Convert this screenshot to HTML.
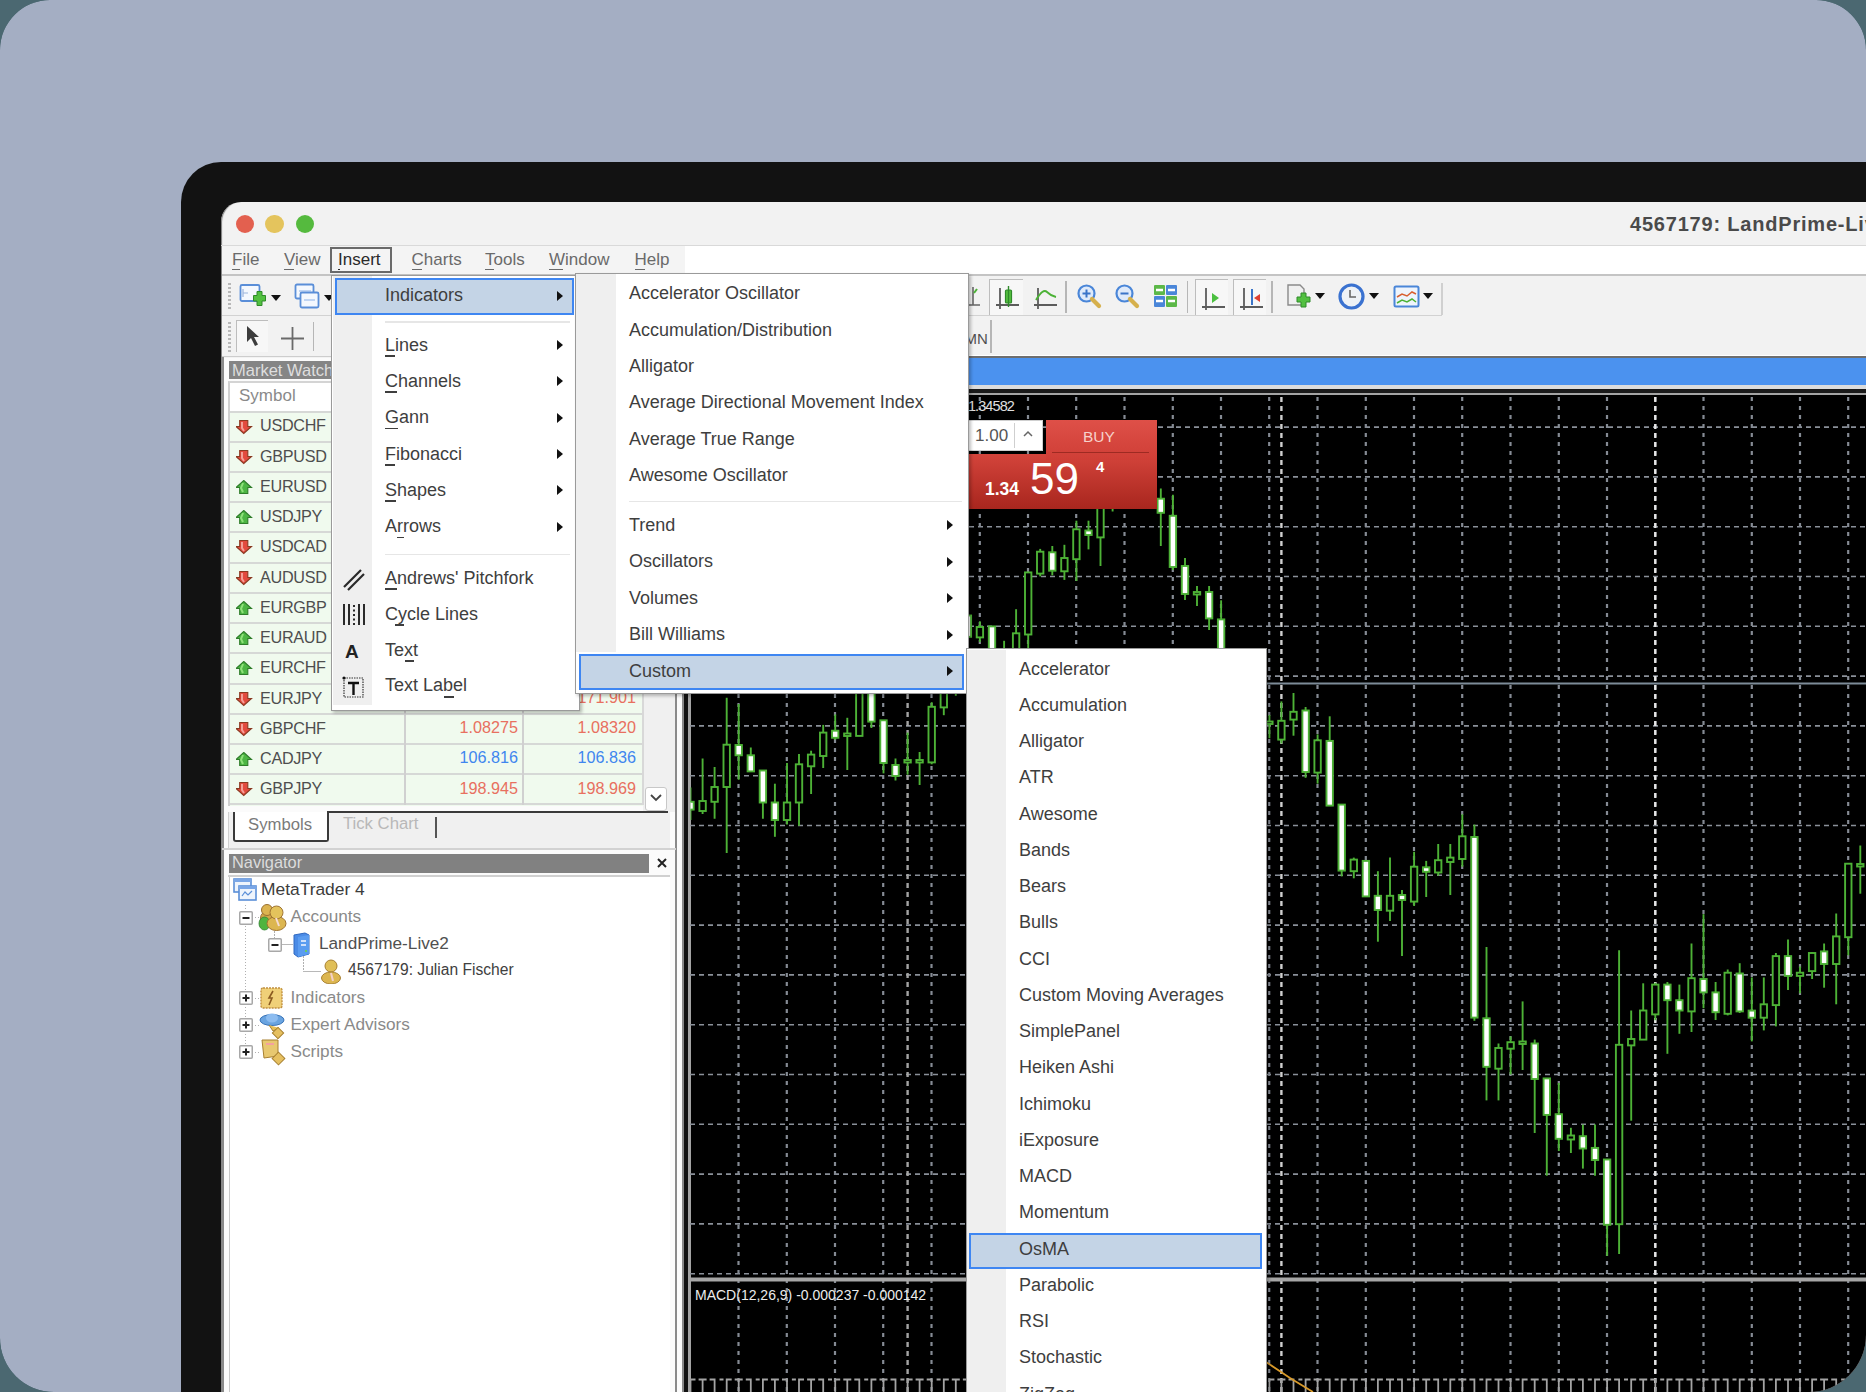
<!DOCTYPE html><html><head><meta charset="utf-8"><style>html,body{margin:0;padding:0;width:1866px;height:1392px;overflow:hidden;background:#4b6871;}#root{position:relative;width:1866px;height:1392px;overflow:hidden;border-radius:50px 50px 57px 54px;font-family:"Liberation Sans",sans-serif;}.t{position:absolute;white-space:nowrap;line-height:1.15;}</style></head><body><div id="root"><div style="position:absolute;left:0px;top:0px;width:1866px;height:1392px;background:#a4aec3;border-radius:50px 50px 57px 54px;"></div>
<div style="position:absolute;left:181px;top:162px;width:1800px;height:1400px;background:#121212;border-radius:40px;"></div>
<div style="position:absolute;left:221px;top:202px;width:1700px;height:1300px;background:#f2f2f2;border-top-left-radius:20px;box-shadow:inset 2px 0 1px -1px #7a7a7a;"></div>
<div style="position:absolute;left:221px;top:245px;width:1700px;height:1px;background:#d9d9d9;"></div>
<div style="position:absolute;left:235.5px;top:214.8px;width:18.4px;height:18.4px;background:#e3604f;border-radius:50%;"></div>
<div style="position:absolute;left:265.40000000000003px;top:214.8px;width:18.4px;height:18.4px;background:#e4c45d;border-radius:50%;"></div>
<div style="position:absolute;left:295.8px;top:214.8px;width:18.4px;height:18.4px;background:#55ba3e;border-radius:50%;"></div>
<div class="t" style="left:1630px;top:213.1px;font-size:20px;color:#4a4a4a;font-weight:bold;letter-spacing:0.8px;">4567179: LandPrime-Live2 - [EURUSD,H1]</div>
<div style="position:absolute;left:222px;top:246px;width:1700px;height:29px;background:#ffffff;"></div>
<div style="position:absolute;left:222px;top:246px;width:463px;height:29px;background:#f4f4f4;"></div>
<div style="position:absolute;left:222px;top:274px;width:1700px;height:1.5px;background:#c4c4c4;"></div>
<div style="position:absolute;left:330px;top:247px;width:62px;height:26px;border:2px solid #6a6a6a;box-sizing:border-box;background:#f4f4f4;"></div>
<div class="t" style="left:232px;top:250.2px;font-size:17px;color:#6a6a6a;font-weight:normal;">File</div>
<div style="position:absolute;left:232px;top:268.5px;width:8px;height:1.8px;background:#6a6a6a;"></div>
<div class="t" style="left:284px;top:250.2px;font-size:17px;color:#6a6a6a;font-weight:normal;">View</div>
<div style="position:absolute;left:284px;top:268.5px;width:10px;height:1.8px;background:#6a6a6a;"></div>
<div class="t" style="left:338px;top:250.2px;font-size:17px;color:#2a2a2a;font-weight:normal;">Insert</div>
<div style="position:absolute;left:338px;top:268.5px;width:2px;height:1.8px;background:#2a2a2a;"></div>
<div class="t" style="left:411.6px;top:250.2px;font-size:17px;color:#6a6a6a;font-weight:normal;">Charts</div>
<div style="position:absolute;left:411.6px;top:268.5px;width:10px;height:1.8px;background:#6a6a6a;"></div>
<div class="t" style="left:485px;top:250.2px;font-size:17px;color:#6a6a6a;font-weight:normal;">Tools</div>
<div style="position:absolute;left:485px;top:268.5px;width:9px;height:1.8px;background:#6a6a6a;"></div>
<div class="t" style="left:549px;top:250.2px;font-size:17px;color:#6a6a6a;font-weight:normal;">Window</div>
<div style="position:absolute;left:549px;top:268.5px;width:14px;height:1.8px;background:#6a6a6a;"></div>
<div class="t" style="left:634.5px;top:250.2px;font-size:17px;color:#6a6a6a;font-weight:normal;">Help</div>
<div style="position:absolute;left:634.5px;top:268.5px;width:10px;height:1.8px;background:#6a6a6a;"></div>
<div style="position:absolute;left:222px;top:275.5px;width:1700px;height:81px;background:#f2f2f2;"></div>
<div style="position:absolute;left:222px;top:314.5px;width:1220px;height:1.5px;background:#d2d2d2;"></div>
<div style="position:absolute;left:1441px;top:283px;width:1.5px;height:32px;background:#d0d0d0;"></div>
<div style="position:absolute;left:222px;top:355.5px;width:464px;height:1.5px;background:#cdcdcd;"></div>
<div style="position:absolute;left:686px;top:355px;width:1200px;height:1px;background:#ffffff;"></div>
<div style="position:absolute;left:686px;top:356.3px;width:1200px;height:1.8px;background:#6e6e6e;"></div>
<div style="position:absolute;left:228px;top:283px;width:3px;height:28px;background:repeating-linear-gradient(#b8b8b8 0 2px,transparent 2px 4px);"></div>
<div style="position:absolute;left:228px;top:322px;width:3px;height:30px;background:repeating-linear-gradient(#b8b8b8 0 2px,transparent 2px 4px);"></div>
<svg style="position:absolute;left:239px;top:283px" width="30" height="28"><rect x="1.5" y="2" width="19" height="16" rx="1.5" fill="#f4f8fe" stroke="#5a8ed8" stroke-width="1.8"/><path d="M4,6 V14 M4,10 H9" stroke="#9ab4dc" stroke-width="1.2"/><path d="M14.5,12.5 h3.5 v-4 h5 v4 h3.5 v5.5 h-3.5 v4.5 h-5 v-4.5 h-3.5 z" fill="#52c040" stroke="#2f8a2a" stroke-width="1"/></svg>
<svg style="position:absolute;left:271px;top:295px" width="10" height="6"><polygon points="0,0 10,0 5,6" fill="#111"/></svg>
<svg style="position:absolute;left:294px;top:283px" width="28" height="28"><rect x="1.5" y="1.5" width="18" height="14" rx="1.5" fill="#f4f8fe" stroke="#5a8ed8" stroke-width="1.8"/><rect x="6.5" y="9.5" width="18" height="15" rx="1.5" fill="#f4f8fe" stroke="#5a8ed8" stroke-width="1.8"/><path d="M5,8 H17 M10,17 H21" stroke="#8ab0e8" stroke-width="1.2"/></svg>
<svg style="position:absolute;left:324px;top:295px" width="10" height="6"><polygon points="0,0 10,0 5,6" fill="#111"/></svg>
<div style="position:absolute;left:235.5px;top:319.5px;width:32.5px;height:32.5px;background:#f7f7f7;border-top:1.5px solid #bdbdbd;border-left:1.5px solid #bdbdbd;box-sizing:border-box;"></div>
<svg style="position:absolute;left:245px;top:325px" width="16" height="24"><path d="M2,1 L2,17 L6,13 L10,21 L13,19.5 L9,12 L14,12 Z" fill="#3c3c3c"/></svg>
<svg style="position:absolute;left:280px;top:326px" width="25" height="25"><path d="M12.5,1 V24 M1,12.5 H24" stroke="#6a6a6a" stroke-width="1.8"/></svg>
<div style="position:absolute;left:312.5px;top:322px;width:1.6px;height:29px;background:#b6b6b6;"></div>
<svg style="position:absolute;left:966px;top:283px" width="16" height="28"><path d="M7,4 V22 M2,22 H14" stroke="#666" stroke-width="1.6"/><path d="M8,10 L11,6" stroke="#4cb236" stroke-width="2"/></svg>
<div style="position:absolute;left:988.5px;top:279px;width:34.5px;height:35.5px;background:#f7f7f7;border-top:1.5px solid #bdbdbd;border-left:1.5px solid #bdbdbd;box-sizing:border-box;"></div>
<svg style="position:absolute;left:995px;top:284px" width="26" height="28"><path d="M5,4 V25 M1,21 H24" stroke="#5c5c5c" stroke-width="1.8"/><rect x="10.5" y="6" width="6" height="13" rx="1" fill="#56c040" stroke="#2f8a2a" stroke-width="1.2"/><path d="M13.5,2 V23" stroke="#2f8a2a" stroke-width="1.4"/></svg>
<svg style="position:absolute;left:1033px;top:284px" width="26" height="28"><path d="M5,4 V25 M1,21 H24" stroke="#5c5c5c" stroke-width="1.8"/><path d="M3,16 Q10,4 14,8 T23,13" fill="none" stroke="#4cb236" stroke-width="1.8"/></svg>
<div style="position:absolute;left:1065px;top:281px;width:1.6px;height:32px;background:#b6b6b6;"></div>
<svg style="position:absolute;left:1077px;top:284px" width="26" height="26"><circle cx="9.5" cy="9.5" r="8" fill="#dfeafa" stroke="#4a86d8" stroke-width="2.2"/><path d="M15,15 L22,22" stroke="#d6b04c" stroke-width="4.2" stroke-linecap="round"/><path d="M5.5,9.5 H13.5" stroke="#3b74c8" stroke-width="2"/><path d="M9.5,5.5 V13.5" stroke="#3b74c8" stroke-width="2"/></svg>
<svg style="position:absolute;left:1115px;top:284px" width="26" height="26"><circle cx="9.5" cy="9.5" r="8" fill="#dfeafa" stroke="#4a86d8" stroke-width="2.2"/><path d="M15,15 L22,22" stroke="#d6b04c" stroke-width="4.2" stroke-linecap="round"/><path d="M5.5,9.5 H13.5" stroke="#3b74c8" stroke-width="2"/></svg>
<svg style="position:absolute;left:1153px;top:284px" width="28" height="26"><rect x="1" y="1" width="11" height="10" rx="1" fill="#5cb848"/><rect x="13" y="1" width="11" height="10" rx="1" fill="#4a86d8"/><rect x="1" y="12" width="11" height="11" rx="1" fill="#4a86d8"/><rect x="13" y="12" width="11" height="11" rx="1" fill="#5cb848"/><path d="M3,6 H10 M15,6 H22 M3,17 H10 M15,17 H22" stroke="#fff" stroke-width="2.4"/></svg>
<div style="position:absolute;left:1186.8px;top:281px;width:1.6px;height:32px;background:#b6b6b6;"></div>
<div style="position:absolute;left:1195px;top:279px;width:32.5px;height:35.5px;background:#f7f7f7;border-top:1.5px solid #bdbdbd;border-left:1.5px solid #bdbdbd;box-sizing:border-box;"></div>
<svg style="position:absolute;left:1201px;top:286px" width="26" height="26"><path d="M5,2 V24 M1,21 H24" stroke="#5c5c5c" stroke-width="1.8"/><polygon points="11,7 18,12 11,17" fill="#4cc040"/></svg>
<div style="position:absolute;left:1232.5px;top:279px;width:33.5px;height:35.5px;background:#f7f7f7;border-top:1.5px solid #bdbdbd;border-left:1.5px solid #bdbdbd;box-sizing:border-box;"></div>
<svg style="position:absolute;left:1239px;top:286px" width="26" height="26"><path d="M5,2 V24 M1,21 H24" stroke="#5c5c5c" stroke-width="1.8"/><path d="M13,3 V19" stroke="#3b74c8" stroke-width="2"/><polygon points="21,8 15,12 21,16" fill="#e04030"/></svg>
<div style="position:absolute;left:1271.2px;top:281px;width:1.6px;height:32px;background:#b6b6b6;"></div>
<svg style="position:absolute;left:1286px;top:283px" width="28" height="30"><path d="M2,2 H14 L18,6 V22 H2 Z" fill="#f0f0f0" stroke="#8a8a8a" stroke-width="1.4"/><path d="M11,14 h4 v-4 h5 v4 h4 v5 h-4 v5 h-5 v-5 h-4 z" fill="#52c040" stroke="#2f8a2a" stroke-width="1"/></svg>
<svg style="position:absolute;left:1314.5px;top:293px" width="10" height="6"><polygon points="0,0 10,0 5,6" fill="#111"/></svg>
<svg style="position:absolute;left:1338px;top:283px" width="28" height="28"><circle cx="13.5" cy="13.5" r="11.5" fill="#eef2f6" stroke="#3a72d0" stroke-width="3.2"/><path d="M12,7 V14 H18" fill="none" stroke="#666" stroke-width="1.6"/></svg>
<svg style="position:absolute;left:1369px;top:293px" width="10" height="6"><polygon points="0,0 10,0 5,6" fill="#111"/></svg>
<svg style="position:absolute;left:1393px;top:285px" width="28" height="24"><rect x="1.5" y="1.5" width="24" height="20" rx="1.5" fill="#eef4fc" stroke="#4a86d8" stroke-width="2"/><path d="M4,12 L9,9 L14,11 L19,7 L23,9" fill="none" stroke="#d86030" stroke-width="1.5"/><path d="M4,18 L9,15 L14,17 L19,14 L23,17" fill="none" stroke="#4cb236" stroke-width="1.5"/></svg>
<svg style="position:absolute;left:1423px;top:293px" width="10" height="6"><polygon points="0,0 10,0 5,6" fill="#111"/></svg>
<div class="t" style="left:964.5px;top:329.9px;font-size:15px;color:#505050;font-weight:normal;">MN</div>
<div style="position:absolute;left:990px;top:320px;width:1.6px;height:33px;background:#b6b6b6;"></div>
<div style="position:absolute;left:222px;top:358px;width:454px;height:1100px;background:#fbfbfb;"></div>
<div style="position:absolute;left:222px;top:356.5px;width:2px;height:1100px;background:#8a8a8a;"></div>
<div style="position:absolute;left:643px;top:380px;width:32px;height:432px;background:#f0f0f0;"></div>
<div style="position:absolute;left:228px;top:812px;width:442px;height:37px;background:#f0f0f0;border-left:1.5px solid #d0d0d0;box-sizing:border-box;"></div>
<div style="position:absolute;left:675px;top:358px;width:2px;height:1100px;background:#8a8a8a;"></div>
<div style="position:absolute;left:677px;top:358px;width:5px;height:1100px;background:#fbfbfb;"></div>
<div style="position:absolute;left:682px;top:358px;width:2px;height:1100px;background:#8a8a8a;"></div>
<div style="position:absolute;left:684px;top:358px;width:4px;height:1100px;background:#121212;"></div>
<div style="position:absolute;left:228.5px;top:361px;width:420px;height:18px;background:#858585;"></div>
<div class="t" style="left:232px;top:360.5px;font-size:16.5px;color:#dedede;font-weight:normal;">Market Watch</div>
<div style="position:absolute;left:228px;top:380.5px;width:415px;height:425px;background:#f0faee;border-left:2px solid #cfcfcf;border-top:2px solid #d4d4d4;box-sizing:border-box;"></div>
<div style="position:absolute;left:230px;top:382.5px;width:413px;height:28.5px;background:#ffffff;"></div>
<div class="t" style="left:239px;top:386.2px;font-size:17px;color:#8a8a8a;font-weight:normal;">Symbol</div>
<div class="t" style="left:419px;top:386.2px;font-size:17px;color:#8a8a8a;font-weight:normal;">Bid</div>
<div class="t" style="left:537px;top:386.2px;font-size:17px;color:#8a8a8a;font-weight:normal;">Ask</div>
<div style="position:absolute;left:229.5px;top:410.5px;width:413px;height:2px;background:#d6d8d6;"></div>
<div style="position:absolute;left:229.5px;top:440.73px;width:413px;height:2px;background:#d6d8d6;"></div>
<div style="position:absolute;left:229.5px;top:470.96px;width:413px;height:2px;background:#d6d8d6;"></div>
<div style="position:absolute;left:229.5px;top:501.19px;width:413px;height:2px;background:#d6d8d6;"></div>
<div style="position:absolute;left:229.5px;top:531.42px;width:413px;height:2px;background:#d6d8d6;"></div>
<div style="position:absolute;left:229.5px;top:561.65px;width:413px;height:2px;background:#d6d8d6;"></div>
<div style="position:absolute;left:229.5px;top:591.88px;width:413px;height:2px;background:#d6d8d6;"></div>
<div style="position:absolute;left:229.5px;top:622.11px;width:413px;height:2px;background:#d6d8d6;"></div>
<div style="position:absolute;left:229.5px;top:652.34px;width:413px;height:2px;background:#d6d8d6;"></div>
<div style="position:absolute;left:229.5px;top:682.5699999999999px;width:413px;height:2px;background:#d6d8d6;"></div>
<div style="position:absolute;left:229.5px;top:712.8px;width:413px;height:2px;background:#d6d8d6;"></div>
<div style="position:absolute;left:229.5px;top:743.03px;width:413px;height:2px;background:#d6d8d6;"></div>
<div style="position:absolute;left:229.5px;top:773.26px;width:413px;height:2px;background:#d6d8d6;"></div>
<div style="position:absolute;left:229.5px;top:803.49px;width:413px;height:2px;background:#d6d8d6;"></div>
<div style="position:absolute;left:404px;top:411px;width:2px;height:394px;background:#d0d0d0;"></div>
<div style="position:absolute;left:521.5px;top:411px;width:2px;height:394px;background:#d0d0d0;"></div>
<div style="position:absolute;left:642px;top:380px;width:1.5px;height:425px;background:#d8d8d8;"></div>
<svg style="position:absolute;left:236px;top:419.5px" width="17" height="15"><polygon points="3.7,0.5 11.8,0.5 11.8,6.5 15.5,6.5 7.75,13.5 0,6.5 3.7,6.5" fill="#e24a3e" stroke="#8a3a22" stroke-width="1.1"/><path d="M6,2 L6,8 L8,11" stroke="#f4a098" stroke-width="2" fill="none"/></svg>
<div class="t" style="left:260px;top:416.4px;font-size:16.2px;color:#4e4e4e;font-weight:normal;letter-spacing:-0.3px;">USDCHF</div>
<svg style="position:absolute;left:236px;top:449.73px" width="17" height="15"><polygon points="3.7,0.5 11.8,0.5 11.8,6.5 15.5,6.5 7.75,13.5 0,6.5 3.7,6.5" fill="#e24a3e" stroke="#8a3a22" stroke-width="1.1"/><path d="M6,2 L6,8 L8,11" stroke="#f4a098" stroke-width="2" fill="none"/></svg>
<div class="t" style="left:260px;top:446.6px;font-size:16.2px;color:#4e4e4e;font-weight:normal;letter-spacing:-0.3px;">GBPUSD</div>
<svg style="position:absolute;left:236px;top:479.96px" width="17" height="15"><polygon points="7.75,0.5 15.5,7.5 11.8,7.5 11.8,13.5 3.7,13.5 3.7,7.5 0,7.5" fill="#4cb543" stroke="#2f7d2a" stroke-width="1.1"/><path d="M7,3 L5,8 L7,12" stroke="#8fe27a" stroke-width="2" fill="none"/></svg>
<div class="t" style="left:260px;top:476.8px;font-size:16.2px;color:#4e4e4e;font-weight:normal;letter-spacing:-0.3px;">EURUSD</div>
<svg style="position:absolute;left:236px;top:510.19000000000005px" width="17" height="15"><polygon points="7.75,0.5 15.5,7.5 11.8,7.5 11.8,13.5 3.7,13.5 3.7,7.5 0,7.5" fill="#4cb543" stroke="#2f7d2a" stroke-width="1.1"/><path d="M7,3 L5,8 L7,12" stroke="#8fe27a" stroke-width="2" fill="none"/></svg>
<div class="t" style="left:260px;top:507.1px;font-size:16.2px;color:#4e4e4e;font-weight:normal;letter-spacing:-0.3px;">USDJPY</div>
<svg style="position:absolute;left:236px;top:540.42px" width="17" height="15"><polygon points="3.7,0.5 11.8,0.5 11.8,6.5 15.5,6.5 7.75,13.5 0,6.5 3.7,6.5" fill="#e24a3e" stroke="#8a3a22" stroke-width="1.1"/><path d="M6,2 L6,8 L8,11" stroke="#f4a098" stroke-width="2" fill="none"/></svg>
<div class="t" style="left:260px;top:537.3px;font-size:16.2px;color:#4e4e4e;font-weight:normal;letter-spacing:-0.3px;">USDCAD</div>
<svg style="position:absolute;left:236px;top:570.65px" width="17" height="15"><polygon points="3.7,0.5 11.8,0.5 11.8,6.5 15.5,6.5 7.75,13.5 0,6.5 3.7,6.5" fill="#e24a3e" stroke="#8a3a22" stroke-width="1.1"/><path d="M6,2 L6,8 L8,11" stroke="#f4a098" stroke-width="2" fill="none"/></svg>
<div class="t" style="left:260px;top:567.5px;font-size:16.2px;color:#4e4e4e;font-weight:normal;letter-spacing:-0.3px;">AUDUSD</div>
<svg style="position:absolute;left:236px;top:600.88px" width="17" height="15"><polygon points="7.75,0.5 15.5,7.5 11.8,7.5 11.8,13.5 3.7,13.5 3.7,7.5 0,7.5" fill="#4cb543" stroke="#2f7d2a" stroke-width="1.1"/><path d="M7,3 L5,8 L7,12" stroke="#8fe27a" stroke-width="2" fill="none"/></svg>
<div class="t" style="left:260px;top:597.8px;font-size:16.2px;color:#4e4e4e;font-weight:normal;letter-spacing:-0.3px;">EURGBP</div>
<svg style="position:absolute;left:236px;top:631.11px" width="17" height="15"><polygon points="7.75,0.5 15.5,7.5 11.8,7.5 11.8,13.5 3.7,13.5 3.7,7.5 0,7.5" fill="#4cb543" stroke="#2f7d2a" stroke-width="1.1"/><path d="M7,3 L5,8 L7,12" stroke="#8fe27a" stroke-width="2" fill="none"/></svg>
<div class="t" style="left:260px;top:628.0px;font-size:16.2px;color:#4e4e4e;font-weight:normal;letter-spacing:-0.3px;">EURAUD</div>
<svg style="position:absolute;left:236px;top:661.34px" width="17" height="15"><polygon points="7.75,0.5 15.5,7.5 11.8,7.5 11.8,13.5 3.7,13.5 3.7,7.5 0,7.5" fill="#4cb543" stroke="#2f7d2a" stroke-width="1.1"/><path d="M7,3 L5,8 L7,12" stroke="#8fe27a" stroke-width="2" fill="none"/></svg>
<div class="t" style="left:260px;top:658.2px;font-size:16.2px;color:#4e4e4e;font-weight:normal;letter-spacing:-0.3px;">EURCHF</div>
<svg style="position:absolute;left:236px;top:691.5699999999999px" width="17" height="15"><polygon points="3.7,0.5 11.8,0.5 11.8,6.5 15.5,6.5 7.75,13.5 0,6.5 3.7,6.5" fill="#e24a3e" stroke="#8a3a22" stroke-width="1.1"/><path d="M6,2 L6,8 L8,11" stroke="#f4a098" stroke-width="2" fill="none"/></svg>
<div class="t" style="left:260px;top:688.5px;font-size:16.2px;color:#4e4e4e;font-weight:normal;letter-spacing:-0.3px;">EURJPY</div>
<div class="t" style="left:404px;width:114px;text-align:right;top:687.8px;font-size:16.2px;color:#e8705f;">171.877</div>
<div class="t" style="left:522px;width:114px;text-align:right;top:687.8px;font-size:16.2px;color:#e8705f;">171.901</div>
<svg style="position:absolute;left:236px;top:721.8px" width="17" height="15"><polygon points="3.7,0.5 11.8,0.5 11.8,6.5 15.5,6.5 7.75,13.5 0,6.5 3.7,6.5" fill="#e24a3e" stroke="#8a3a22" stroke-width="1.1"/><path d="M6,2 L6,8 L8,11" stroke="#f4a098" stroke-width="2" fill="none"/></svg>
<div class="t" style="left:260px;top:718.7px;font-size:16.2px;color:#4e4e4e;font-weight:normal;letter-spacing:-0.3px;">GBPCHF</div>
<div class="t" style="left:404px;width:114px;text-align:right;top:718.0px;font-size:16.2px;color:#e8705f;">1.08275</div>
<div class="t" style="left:522px;width:114px;text-align:right;top:718.0px;font-size:16.2px;color:#e8705f;">1.08320</div>
<svg style="position:absolute;left:236px;top:752.03px" width="17" height="15"><polygon points="7.75,0.5 15.5,7.5 11.8,7.5 11.8,13.5 3.7,13.5 3.7,7.5 0,7.5" fill="#4cb543" stroke="#2f7d2a" stroke-width="1.1"/><path d="M7,3 L5,8 L7,12" stroke="#8fe27a" stroke-width="2" fill="none"/></svg>
<div class="t" style="left:260px;top:748.9px;font-size:16.2px;color:#4e4e4e;font-weight:normal;letter-spacing:-0.3px;">CADJPY</div>
<div class="t" style="left:404px;width:114px;text-align:right;top:748.2px;font-size:16.2px;color:#3f86ee;">106.816</div>
<div class="t" style="left:522px;width:114px;text-align:right;top:748.2px;font-size:16.2px;color:#3f86ee;">106.836</div>
<svg style="position:absolute;left:236px;top:782.26px" width="17" height="15"><polygon points="3.7,0.5 11.8,0.5 11.8,6.5 15.5,6.5 7.75,13.5 0,6.5 3.7,6.5" fill="#e24a3e" stroke="#8a3a22" stroke-width="1.1"/><path d="M6,2 L6,8 L8,11" stroke="#f4a098" stroke-width="2" fill="none"/></svg>
<div class="t" style="left:260px;top:779.1px;font-size:16.2px;color:#4e4e4e;font-weight:normal;letter-spacing:-0.3px;">GBPJPY</div>
<div class="t" style="left:404px;width:114px;text-align:right;top:778.5px;font-size:16.2px;color:#e8705f;">198.945</div>
<div class="t" style="left:522px;width:114px;text-align:right;top:778.5px;font-size:16.2px;color:#e8705f;">198.969</div>
<div style="position:absolute;left:645px;top:786.5px;width:22px;height:24px;background:#fff;border:1px solid #c8c8c8;border-radius:3px;box-sizing:border-box;"></div>
<svg style="position:absolute;left:648px;top:792px" width="16" height="12"><polyline points="3,3 8,8 13,3" fill="none" stroke="#444" stroke-width="1.8"/></svg>
<div style="position:absolute;left:327px;top:811px;width:341px;height:2.2px;background:#3a3a3a;"></div>
<div style="position:absolute;left:232.5px;top:811.5px;width:96px;height:30px;background:#fff;border:2.2px solid #3a3a3a;border-top:none;border-radius:0 0 3px 3px;box-sizing:border-box;"></div>
<div style="position:absolute;left:232.5px;top:811.5px;width:2.2px;height:4px;background:#3a3a3a;"></div>
<div class="t" style="left:248px;top:815.4px;font-size:16.7px;color:#7a7a7a;font-weight:normal;">Symbols</div>
<div class="t" style="left:343px;top:814.4px;font-size:16.7px;color:#b8b8b8;font-weight:normal;">Tick Chart</div>
<div style="position:absolute;left:434.5px;top:817px;width:2.2px;height:21px;background:#555;"></div>
<div style="position:absolute;left:222px;top:848px;width:454px;height:2px;background:#d2d2d2;"></div>
<div style="position:absolute;left:228.5px;top:854px;width:420px;height:18.5px;background:#818181;"></div>
<div class="t" style="left:232px;top:853.1px;font-size:16.4px;color:#dcdcdc;font-weight:normal;">Navigator</div>
<svg style="position:absolute;left:656px;top:857px" width="12" height="12"><path d="M2,2 L10,10 M10,2 L2,10" stroke="#222" stroke-width="2"/></svg>
<div style="position:absolute;left:228px;top:874.5px;width:442px;height:2px;background:#d0d0d0;"></div>
<div style="position:absolute;left:229px;top:876.5px;width:441px;height:600px;background:#ffffff;border-left:1.5px solid #c8c8c8;box-sizing:border-box;"></div>
<div style="position:absolute;left:244.5px;top:905px;width:1.3px;height:148px;background:repeating-linear-gradient(#b0b0b0 0 1.5px,transparent 1.5px 3px);"></div>
<div style="position:absolute;left:273.5px;top:928px;width:1.3px;height:10px;background:repeating-linear-gradient(#b0b0b0 0 1.5px,transparent 1.5px 3px);"></div>
<div style="position:absolute;left:302.5px;top:956px;width:1.3px;height:16px;background:repeating-linear-gradient(#b0b0b0 0 1.5px,transparent 1.5px 3px);"></div>
<div style="position:absolute;left:302.5px;top:970.5px;width:18px;height:1.3px;background:#b8b8b8;"></div>
<div style="position:absolute;left:281px;top:944px;width:12px;height:1.3px;background:#b8b8b8;"></div>
<div style="position:absolute;left:252px;top:917px;width:7px;height:1.3px;background:repeating-linear-gradient(90deg,#b0b0b0 0 1.5px,transparent 1.5px 3px);"></div>
<div style="position:absolute;left:252px;top:998px;width:7px;height:1.3px;background:repeating-linear-gradient(90deg,#b0b0b0 0 1.5px,transparent 1.5px 3px);"></div>
<div style="position:absolute;left:252px;top:1025px;width:7px;height:1.3px;background:repeating-linear-gradient(90deg,#b0b0b0 0 1.5px,transparent 1.5px 3px);"></div>
<div style="position:absolute;left:252px;top:1052px;width:7px;height:1.3px;background:repeating-linear-gradient(90deg,#b0b0b0 0 1.5px,transparent 1.5px 3px);"></div>
<svg style="position:absolute;left:238.5px;top:910.5px" width="14" height="14"><rect x="0.75" y="0.75" width="12.5" height="12.5" fill="#fff" stroke="#a8a8a8" stroke-width="1.5" rx="1"/><path d="M3.5,7 H10.5" stroke="#222" stroke-width="2"/></svg>
<svg style="position:absolute;left:267.5px;top:937.5px" width="14" height="14"><rect x="0.75" y="0.75" width="12.5" height="12.5" fill="#fff" stroke="#a8a8a8" stroke-width="1.5" rx="1"/><path d="M3.5,7 H10.5" stroke="#222" stroke-width="2"/></svg>
<svg style="position:absolute;left:238.5px;top:991px" width="14" height="14"><rect x="0.75" y="0.75" width="12.5" height="12.5" fill="#fff" stroke="#a8a8a8" stroke-width="1.5" rx="1"/><path d="M3.5,7 H10.5" stroke="#222" stroke-width="2"/><path d="M7,3.5 V10.5" stroke="#222" stroke-width="2"/></svg>
<svg style="position:absolute;left:238.5px;top:1018px" width="14" height="14"><rect x="0.75" y="0.75" width="12.5" height="12.5" fill="#fff" stroke="#a8a8a8" stroke-width="1.5" rx="1"/><path d="M3.5,7 H10.5" stroke="#222" stroke-width="2"/><path d="M7,3.5 V10.5" stroke="#222" stroke-width="2"/></svg>
<svg style="position:absolute;left:238.5px;top:1045px" width="14" height="14"><rect x="0.75" y="0.75" width="12.5" height="12.5" fill="#fff" stroke="#a8a8a8" stroke-width="1.5" rx="1"/><path d="M3.5,7 H10.5" stroke="#222" stroke-width="2"/><path d="M7,3.5 V10.5" stroke="#222" stroke-width="2"/></svg>
<svg style="position:absolute;left:233px;top:878px" width="24" height="24">
<rect x="1" y="1" width="17" height="13" fill="#eef4fc" stroke="#5b8fd8" stroke-width="1.6"/>
<rect x="1" y="1" width="17" height="3" fill="#7aa6e6"/>
<rect x="6" y="8" width="17" height="14" fill="#eef4fc" stroke="#5b8fd8" stroke-width="1.6"/>
<rect x="6" y="8" width="17" height="3" fill="#7aa6e6"/>
<polyline points="9,18 12,14 15,17 19,13" fill="none" stroke="#5b8fd8" stroke-width="1.2"/></svg>
<svg style="position:absolute;left:258px;top:903px" width="30" height="28">
<ellipse cx="10" cy="15" rx="7.5" ry="7" fill="#d2a848" stroke="#9a7030" stroke-width="1"/>
<circle cx="9" cy="7" r="5.5" fill="#dcb450" stroke="#9a7030" stroke-width="1"/>
<ellipse cx="6.5" cy="20.5" rx="5.5" ry="6.5" fill="#4fb43e" stroke="#2f8030" stroke-width="0.8"/>
<ellipse cx="18.5" cy="20.5" rx="9.5" ry="7" fill="#dcb650" stroke="#a07432" stroke-width="1"/>
<circle cx="18.5" cy="9.5" r="6.5" fill="#e4c35c" stroke="#a07432" stroke-width="1"/>
<path d="M18,15 L21,23" stroke="#f6dcd4" stroke-width="2"/></svg>
<svg style="position:absolute;left:292px;top:932px" width="20" height="26">
<path d="M2,3 L13,1 L17,3 L17,22 L6,25 L2,22 Z" fill="#4a8be6" stroke="#2f68c0" stroke-width="1"/>
<path d="M6,5 L17,3 L17,22 L6,25 Z" fill="#5a9cf0"/>
<rect x="9" y="8" width="5" height="2" fill="#cfe0fa"/><rect x="9" y="12" width="5" height="2" fill="#cfe0fa"/>
<rect x="13" y="18" width="2" height="2" fill="#6c6"/></svg>
<svg style="position:absolute;left:320px;top:959px" width="22" height="25">
<circle cx="11" cy="7" r="6" fill="#e0bf58" stroke="#a88030" stroke-width="1"/>
<ellipse cx="11" cy="19" rx="9.5" ry="6" fill="#dcb650" stroke="#a88030" stroke-width="1"/>
<path d="M11,14 L13,22" stroke="#f4d0c8" stroke-width="2"/></svg>
<svg style="position:absolute;left:260px;top:986px" width="24" height="24">
<rect x="1" y="2" width="21" height="20" rx="2" fill="#f0d078" stroke="#c09040" stroke-width="1.4" stroke-dasharray="2 1"/>
<path d="M13,5 L9,12 L12,12 L9,19" fill="none" stroke="#8a5a20" stroke-width="1.6"/></svg>
<svg style="position:absolute;left:259px;top:1011px" width="28" height="28">
<ellipse cx="13" cy="9" rx="12" ry="5.5" fill="#6aa4e0" stroke="#3a74b8" stroke-width="1"/>
<ellipse cx="13" cy="7" rx="6" ry="4.5" fill="#8cbcf0"/>
<path d="M10,14 L14,20 L20,17" fill="#e8c058" stroke="#a88030" stroke-width="1"/>
<rect x="15" y="18" width="8" height="8" transform="rotate(45 19 22)" fill="#e6c060" stroke="#a88030" stroke-width="1"/></svg>
<svg style="position:absolute;left:259px;top:1038px" width="28" height="28">
<path d="M3,2 L19,2 L19,18 L5,20 Z" fill="#e8c870" stroke="#a88030" stroke-width="1"/>
<rect x="7" y="5" width="8" height="2" fill="#f4a0a0"/>
<rect x="15" y="16" width="9" height="9" transform="rotate(45 19.5 20.5)" fill="#e6c060" stroke="#a88030" stroke-width="1"/></svg>
<div class="t" style="left:261px;top:879.0px;font-size:17.4px;color:#3c3c3c;font-weight:normal;">MetaTrader 4</div>
<div class="t" style="left:290.5px;top:906.6px;font-size:17.2px;color:#8a8a8a;font-weight:normal;">Accounts</div>
<div class="t" style="left:319px;top:933.6px;font-size:17.2px;color:#505050;font-weight:normal;">LandPrime-Live2</div>
<div class="t" style="left:348px;top:961.0px;font-size:15.6px;color:#404040;font-weight:normal;">4567179: Julian Fischer</div>
<div class="t" style="left:290.5px;top:988.1px;font-size:17.2px;color:#8a8a8a;font-weight:normal;">Indicators</div>
<div class="t" style="left:290.5px;top:1015.1px;font-size:17.2px;color:#8a8a8a;font-weight:normal;">Expert Advisors</div>
<div class="t" style="left:290.5px;top:1042.1px;font-size:17.2px;color:#8a8a8a;font-weight:normal;">Scripts</div>
<div style="position:absolute;left:686px;top:358.3px;width:1200px;height:27px;background:#4b92ef;"></div>
<div style="position:absolute;left:686px;top:385px;width:1200px;height:4px;background:#dcdcdc;"></div>
<div style="position:absolute;left:686px;top:389px;width:1200px;height:3.5px;background:#1a1a1a;"></div>
<div style="position:absolute;left:686px;top:392.5px;width:1200px;height:2.5px;background:#a4a4a4;"></div>
<div style="position:absolute;left:688px;top:395px;width:1200px;height:1000px;background:#000;"></div>
<div style="position:absolute;left:688px;top:392.5px;width:2.5px;height:1000px;background:#a4a4a4;"></div>
<svg style="position:absolute;left:0;top:0" width="1866" height="1392">
<defs><clipPath id="cc"><rect x="690.5" y="395" width="1180" height="883"/></clipPath>
<clipPath id="mc"><rect x="690.5" y="1282" width="1180" height="120"/></clipPath></defs>
<g stroke="#8a9099" stroke-width="1.6">
<line x1="690" y1="427.1" x2="1866" y2="427.1" stroke-dasharray="5 4"/>
<line x1="690" y1="476.9" x2="1866" y2="476.9" stroke-dasharray="5 4"/>
<line x1="690" y1="526.7" x2="1866" y2="526.7" stroke-dasharray="5 4"/>
<line x1="690" y1="576.5" x2="1866" y2="576.5" stroke-dasharray="5 4"/>
<line x1="690" y1="626.3" x2="1866" y2="626.3" stroke-dasharray="5 4"/>
<line x1="690" y1="676.1" x2="1866" y2="676.1" stroke-dasharray="5 4"/>
<line x1="690" y1="725.9" x2="1866" y2="725.9" stroke-dasharray="5 4"/>
<line x1="690" y1="775.7" x2="1866" y2="775.7" stroke-dasharray="5 4"/>
<line x1="690" y1="825.5" x2="1866" y2="825.5" stroke-dasharray="5 4"/>
<line x1="690" y1="875.3" x2="1866" y2="875.3" stroke-dasharray="5 4"/>
<line x1="690" y1="925.1" x2="1866" y2="925.1" stroke-dasharray="5 4"/>
<line x1="690" y1="974.9" x2="1866" y2="974.9" stroke-dasharray="5 4"/>
<line x1="690" y1="1024.7" x2="1866" y2="1024.7" stroke-dasharray="5 4"/>
<line x1="690" y1="1074.5" x2="1866" y2="1074.5" stroke-dasharray="5 4"/>
<line x1="690" y1="1124.3" x2="1866" y2="1124.3" stroke-dasharray="5 4"/>
<line x1="690" y1="1174.1" x2="1866" y2="1174.1" stroke-dasharray="5 4"/>
<line x1="690" y1="1223.9" x2="1866" y2="1223.9" stroke-dasharray="5 4"/>
<line x1="690" y1="1273.7" x2="1866" y2="1273.7" stroke-dasharray="5 4"/>
</g><g stroke="#858b94" stroke-width="2.2" stroke-dasharray="4 5">
<line x1="738.5" y1="397" x2="738.5" y2="1392"/>
<line x1="786.8" y1="397" x2="786.8" y2="1392"/>
<line x1="835.0" y1="397" x2="835.0" y2="1392"/>
<line x1="883.2" y1="397" x2="883.2" y2="1392"/>
<line x1="931.5" y1="397" x2="931.5" y2="1392"/>
<line x1="979.8" y1="397" x2="979.8" y2="1392"/>
<line x1="1028.0" y1="397" x2="1028.0" y2="1392"/>
<line x1="1076.2" y1="397" x2="1076.2" y2="1392"/>
<line x1="1124.5" y1="397" x2="1124.5" y2="1392"/>
<line x1="1172.8" y1="397" x2="1172.8" y2="1392"/>
<line x1="1221.0" y1="397" x2="1221.0" y2="1392"/>
<line x1="1269.2" y1="397" x2="1269.2" y2="1392"/>
<line x1="1317.5" y1="397" x2="1317.5" y2="1392"/>
<line x1="1365.8" y1="397" x2="1365.8" y2="1392"/>
<line x1="1414.0" y1="397" x2="1414.0" y2="1392"/>
<line x1="1462.2" y1="397" x2="1462.2" y2="1392"/>
<line x1="1510.5" y1="397" x2="1510.5" y2="1392"/>
<line x1="1558.8" y1="397" x2="1558.8" y2="1392"/>
<line x1="1607.0" y1="397" x2="1607.0" y2="1392"/>
<line x1="1655.2" y1="397" x2="1655.2" y2="1392"/>
<line x1="1703.5" y1="397" x2="1703.5" y2="1392"/>
<line x1="1751.8" y1="397" x2="1751.8" y2="1392"/>
<line x1="1800.0" y1="397" x2="1800.0" y2="1392"/>
<line x1="1848.2" y1="397" x2="1848.2" y2="1392"/>
</g><g stroke-width="2.4" stroke-dasharray="5 4">
<line x1="907.6" y1="397" x2="907.6" y2="1392" stroke="#a4a4a4"/>
<line x1="1281.4" y1="397" x2="1281.4" y2="1392" stroke="#cfcfcf"/>
<line x1="1655.3" y1="397" x2="1655.3" y2="1392" stroke="#e6e6e6"/>
</g>
<line x1="690" y1="683.5" x2="1866" y2="683.5" stroke="#7d8b98" stroke-width="2"/>
<g clip-path="url(#cc)" stroke="#4db236" stroke-width="1.9">
<line x1="690.5" y1="787.6" x2="690.5" y2="820.0"/>
<rect x="687.3" y="801.8" width="6.4" height="7.8" fill="#ffffff"/>
<line x1="702.6" y1="758.5" x2="702.6" y2="814.0"/>
<rect x="699.4" y="801.0" width="6.4" height="10.0" fill="#000000"/>
<line x1="714.6" y1="767.0" x2="714.6" y2="818.7"/>
<rect x="711.4" y="787.0" width="6.4" height="14.8" fill="#000000"/>
<line x1="726.7" y1="697.7" x2="726.7" y2="853.0"/>
<rect x="723.5" y="744.7" width="6.4" height="42.3" fill="#000000"/>
<line x1="738.7" y1="704.0" x2="738.7" y2="779.8"/>
<rect x="735.5" y="745.0" width="6.4" height="10.3" fill="#ffffff"/>
<line x1="750.8" y1="747.5" x2="750.8" y2="772.0"/>
<rect x="747.6" y="755.3" width="6.4" height="16.1" fill="#ffffff"/>
<line x1="762.9" y1="770.0" x2="762.9" y2="818.7"/>
<rect x="759.7" y="770.5" width="6.4" height="32.0" fill="#ffffff"/>
<line x1="774.9" y1="783.7" x2="774.9" y2="836.8"/>
<rect x="771.7" y="802.5" width="6.4" height="17.5" fill="#ffffff"/>
<line x1="787.0" y1="763.0" x2="787.0" y2="824.5"/>
<rect x="783.8" y="802.5" width="6.4" height="17.5" fill="#000000"/>
<line x1="799.0" y1="754.0" x2="799.0" y2="825.8"/>
<rect x="795.8" y="764.3" width="6.4" height="38.2" fill="#000000"/>
<line x1="811.1" y1="750.7" x2="811.1" y2="794.0"/>
<rect x="807.9" y="754.6" width="6.4" height="11.7" fill="#000000"/>
<line x1="823.2" y1="724.9" x2="823.2" y2="768.0"/>
<rect x="820.0" y="732.6" width="6.4" height="23.4" fill="#000000"/>
<line x1="835.2" y1="714.5" x2="835.2" y2="739.7"/>
<rect x="832.0" y="730.7" width="6.4" height="7.1" fill="#ffffff"/>
<line x1="847.3" y1="717.8" x2="847.3" y2="770.0"/>
<rect x="844.1" y="733.5" width="6.4" height="2.5" fill="#000000"/>
<line x1="859.3" y1="660.0" x2="859.3" y2="735.9"/>
<rect x="856.1" y="660.0" width="6.4" height="75.9" fill="#000000"/>
<line x1="871.4" y1="660.0" x2="871.4" y2="728.0"/>
<rect x="868.2" y="660.0" width="6.4" height="61.6" fill="#ffffff"/>
<line x1="883.5" y1="720.3" x2="883.5" y2="773.4"/>
<rect x="880.3" y="720.3" width="6.4" height="42.7" fill="#ffffff"/>
<line x1="895.5" y1="758.5" x2="895.5" y2="780.5"/>
<rect x="892.3" y="765.0" width="6.4" height="11.0" fill="#ffffff"/>
<line x1="907.6" y1="732.6" x2="907.6" y2="774.7"/>
<rect x="904.4" y="760.0" width="6.4" height="2.5" fill="#000000"/>
<line x1="919.6" y1="752.0" x2="919.6" y2="785.0"/>
<rect x="916.4" y="760.0" width="6.4" height="2.5" fill="#000000"/>
<line x1="931.7" y1="702.2" x2="931.7" y2="764.3"/>
<rect x="928.5" y="706.8" width="6.4" height="55.6" fill="#000000"/>
<line x1="943.8" y1="660.0" x2="943.8" y2="715.2"/>
<rect x="940.6" y="660.0" width="6.4" height="47.4" fill="#000000"/>
<line x1="955.8" y1="600.0" x2="955.8" y2="695.8"/>
<rect x="952.6" y="600.0" width="6.4" height="50.0" fill="#000000"/>
<line x1="967.9" y1="610.0" x2="967.9" y2="640.0"/>
<rect x="964.7" y="615.5" width="6.4" height="21.3" fill="#ffffff"/>
<line x1="979.9" y1="621.3" x2="979.9" y2="642.0"/>
<rect x="976.7" y="627.0" width="6.4" height="10.4" fill="#000000"/>
<line x1="992.0" y1="626.4" x2="992.0" y2="700.0"/>
<rect x="988.8" y="626.4" width="6.4" height="73.6" fill="#ffffff"/>
<line x1="1004.1" y1="640.8" x2="1004.1" y2="700.0"/>
<rect x="1000.9" y="660.0" width="6.4" height="20.0" fill="#000000"/>
<line x1="1016.1" y1="609.2" x2="1016.1" y2="700.0"/>
<rect x="1012.9" y="633.3" width="6.4" height="66.7" fill="#000000"/>
<line x1="1028.2" y1="572.4" x2="1028.2" y2="700.0"/>
<rect x="1025.0" y="572.4" width="6.4" height="62.1" fill="#000000"/>
<line x1="1040.2" y1="548.9" x2="1040.2" y2="576.4"/>
<rect x="1037.0" y="551.7" width="6.4" height="21.9" fill="#000000"/>
<line x1="1052.3" y1="546.0" x2="1052.3" y2="575.3"/>
<rect x="1049.1" y="552.3" width="6.4" height="18.4" fill="#ffffff"/>
<line x1="1064.4" y1="544.8" x2="1064.4" y2="579.9"/>
<rect x="1061.2" y="558.0" width="6.4" height="13.3" fill="#000000"/>
<line x1="1076.4" y1="520.7" x2="1076.4" y2="581.0"/>
<rect x="1073.2" y="529.3" width="6.4" height="29.9" fill="#000000"/>
<line x1="1088.5" y1="520.7" x2="1088.5" y2="549.4"/>
<rect x="1085.3" y="530.5" width="6.4" height="4.5" fill="#ffffff"/>
<line x1="1100.5" y1="480.0" x2="1100.5" y2="566.0"/>
<rect x="1097.3" y="490.0" width="6.4" height="47.4" fill="#000000"/>
<line x1="1112.6" y1="470.0" x2="1112.6" y2="511.5"/>
<rect x="1109.4" y="480.0" width="6.4" height="20.0" fill="#000000"/>
<line x1="1160.8" y1="488.6" x2="1160.8" y2="546.0"/>
<rect x="1157.6" y="498.7" width="6.4" height="14.1" fill="#ffffff"/>
<line x1="1172.9" y1="494.7" x2="1172.9" y2="570.0"/>
<rect x="1169.7" y="515.8" width="6.4" height="51.2" fill="#ffffff"/>
<line x1="1185.0" y1="558.0" x2="1185.0" y2="600.0"/>
<rect x="1181.8" y="566.0" width="6.4" height="28.0" fill="#ffffff"/>
<line x1="1197.0" y1="586.0" x2="1197.0" y2="606.0"/>
<rect x="1193.8" y="592.0" width="6.4" height="2.5" fill="#000000"/>
<line x1="1209.1" y1="586.0" x2="1209.1" y2="630.0"/>
<rect x="1205.9" y="592.0" width="6.4" height="26.4" fill="#ffffff"/>
<line x1="1221.1" y1="600.3" x2="1221.1" y2="700.0"/>
<rect x="1217.9" y="619.4" width="6.4" height="80.6" fill="#ffffff"/>
<line x1="1269.4" y1="715.0" x2="1269.4" y2="738.3"/>
<rect x="1266.2" y="721.5" width="6.4" height="2.5" fill="#000000"/>
<line x1="1281.4" y1="701.4" x2="1281.4" y2="743.5"/>
<rect x="1278.2" y="720.8" width="6.4" height="18.8" fill="#000000"/>
<line x1="1293.5" y1="693.0" x2="1293.5" y2="735.7"/>
<rect x="1290.3" y="711.8" width="6.4" height="7.8" fill="#000000"/>
<line x1="1305.6" y1="707.0" x2="1305.6" y2="777.8"/>
<rect x="1302.4" y="710.5" width="6.4" height="61.5" fill="#ffffff"/>
<line x1="1317.6" y1="734.4" x2="1317.6" y2="783.6"/>
<rect x="1314.4" y="740.3" width="6.4" height="32.3" fill="#000000"/>
<line x1="1329.7" y1="716.3" x2="1329.7" y2="805.6"/>
<rect x="1326.5" y="740.9" width="6.4" height="64.7" fill="#ffffff"/>
<line x1="1341.7" y1="804.6" x2="1341.7" y2="876.4"/>
<rect x="1338.5" y="804.6" width="6.4" height="66.0" fill="#ffffff"/>
<line x1="1353.8" y1="857.6" x2="1353.8" y2="878.3"/>
<rect x="1350.6" y="859.6" width="6.4" height="11.6" fill="#000000"/>
<line x1="1365.9" y1="860.9" x2="1365.9" y2="896.4"/>
<rect x="1362.7" y="860.9" width="6.4" height="35.5" fill="#ffffff"/>
<line x1="1377.9" y1="871.2" x2="1377.9" y2="941.7"/>
<rect x="1374.7" y="895.8" width="6.4" height="14.2" fill="#ffffff"/>
<line x1="1390.0" y1="857.6" x2="1390.0" y2="921.0"/>
<rect x="1386.8" y="895.8" width="6.4" height="14.9" fill="#000000"/>
<line x1="1402.0" y1="890.0" x2="1402.0" y2="956.0"/>
<rect x="1398.8" y="895.0" width="6.4" height="5.0" fill="#ffffff"/>
<line x1="1414.1" y1="851.8" x2="1414.1" y2="906.0"/>
<rect x="1410.9" y="866.7" width="6.4" height="34.9" fill="#000000"/>
<line x1="1426.2" y1="860.9" x2="1426.2" y2="897.0"/>
<rect x="1423.0" y="867.3" width="6.4" height="4.5" fill="#ffffff"/>
<line x1="1438.2" y1="844.0" x2="1438.2" y2="875.7"/>
<rect x="1435.0" y="860.2" width="6.4" height="12.3" fill="#000000"/>
<line x1="1450.3" y1="844.0" x2="1450.3" y2="895.0"/>
<rect x="1447.1" y="857.6" width="6.4" height="4.4" fill="#000000"/>
<line x1="1462.3" y1="814.3" x2="1462.3" y2="866.7"/>
<rect x="1459.1" y="836.3" width="6.4" height="22.7" fill="#000000"/>
<line x1="1474.4" y1="824.6" x2="1474.4" y2="1020.8"/>
<rect x="1471.2" y="837.0" width="6.4" height="180.6" fill="#ffffff"/>
<line x1="1486.5" y1="947.0" x2="1486.5" y2="1100.4"/>
<rect x="1483.3" y="1018.3" width="6.4" height="48.5" fill="#ffffff"/>
<line x1="1498.5" y1="1043.5" x2="1498.5" y2="1100.4"/>
<rect x="1495.3" y="1048.0" width="6.4" height="20.7" fill="#000000"/>
<line x1="1510.6" y1="1036.4" x2="1510.6" y2="1074.5"/>
<rect x="1507.4" y="1042.2" width="6.4" height="6.5" fill="#000000"/>
<line x1="1522.6" y1="1001.4" x2="1522.6" y2="1070.0"/>
<rect x="1519.4" y="1041.5" width="6.4" height="2.5" fill="#000000"/>
<line x1="1534.7" y1="1039.6" x2="1534.7" y2="1133.0"/>
<rect x="1531.5" y="1043.5" width="6.4" height="35.5" fill="#ffffff"/>
<line x1="1546.8" y1="1078.0" x2="1546.8" y2="1175.7"/>
<rect x="1543.6" y="1078.4" width="6.4" height="36.5" fill="#ffffff"/>
<line x1="1558.8" y1="1083.0" x2="1558.8" y2="1151.0"/>
<rect x="1555.6" y="1114.2" width="6.4" height="24.6" fill="#ffffff"/>
<line x1="1570.9" y1="1127.8" x2="1570.9" y2="1153.0"/>
<rect x="1567.7" y="1135.5" width="6.4" height="4.0" fill="#000000"/>
<line x1="1582.9" y1="1124.6" x2="1582.9" y2="1168.6"/>
<rect x="1579.7" y="1136.2" width="6.4" height="12.3" fill="#ffffff"/>
<line x1="1595.0" y1="1124.6" x2="1595.0" y2="1175.7"/>
<rect x="1591.8" y="1147.9" width="6.4" height="12.1" fill="#ffffff"/>
<line x1="1607.1" y1="1159.0" x2="1607.1" y2="1255.9"/>
<rect x="1603.9" y="1159.5" width="6.4" height="65.3" fill="#ffffff"/>
<line x1="1619.1" y1="950.3" x2="1619.1" y2="1254.0"/>
<rect x="1615.9" y="1044.8" width="6.4" height="179.4" fill="#000000"/>
<line x1="1631.2" y1="1010.5" x2="1631.2" y2="1120.7"/>
<rect x="1628.0" y="1039.0" width="6.4" height="6.4" fill="#000000"/>
<line x1="1643.2" y1="983.3" x2="1643.2" y2="1040.0"/>
<rect x="1640.0" y="1010.5" width="6.4" height="29.1" fill="#000000"/>
<line x1="1655.3" y1="982.7" x2="1655.3" y2="1020.2"/>
<rect x="1652.1" y="984.6" width="6.4" height="29.8" fill="#000000"/>
<line x1="1667.4" y1="982.0" x2="1667.4" y2="1053.8"/>
<rect x="1664.2" y="984.6" width="6.4" height="15.6" fill="#ffffff"/>
<line x1="1679.4" y1="984.6" x2="1679.4" y2="1033.8"/>
<rect x="1676.2" y="1000.2" width="6.4" height="10.3" fill="#ffffff"/>
<line x1="1691.5" y1="943.5" x2="1691.5" y2="1032.0"/>
<rect x="1688.3" y="978.2" width="6.4" height="33.2" fill="#000000"/>
<line x1="1703.5" y1="914.2" x2="1703.5" y2="1008.2"/>
<rect x="1700.3" y="979.0" width="6.4" height="13.4" fill="#ffffff"/>
<line x1="1715.6" y1="982.0" x2="1715.6" y2="1020.0"/>
<rect x="1712.4" y="992.4" width="6.4" height="19.8" fill="#ffffff"/>
<line x1="1727.7" y1="969.5" x2="1727.7" y2="1015.4"/>
<rect x="1724.5" y="972.7" width="6.4" height="41.1" fill="#000000"/>
<line x1="1739.7" y1="963.2" x2="1739.7" y2="1013.0"/>
<rect x="1736.5" y="973.5" width="6.4" height="37.9" fill="#ffffff"/>
<line x1="1751.8" y1="977.4" x2="1751.8" y2="1041.4"/>
<rect x="1748.6" y="1010.6" width="6.4" height="7.1" fill="#ffffff"/>
<line x1="1763.8" y1="977.4" x2="1763.8" y2="1030.4"/>
<rect x="1760.6" y="1004.3" width="6.4" height="13.4" fill="#000000"/>
<line x1="1775.9" y1="953.0" x2="1775.9" y2="1026.4"/>
<rect x="1772.7" y="956.1" width="6.4" height="49.0" fill="#000000"/>
<line x1="1788.0" y1="939.5" x2="1788.0" y2="990.0"/>
<rect x="1784.8" y="956.1" width="6.4" height="19.8" fill="#ffffff"/>
<line x1="1800.0" y1="966.4" x2="1800.0" y2="993.2"/>
<rect x="1796.8" y="972.7" width="6.4" height="3.2" fill="#000000"/>
<line x1="1812.1" y1="952.2" x2="1812.1" y2="979.0"/>
<rect x="1808.9" y="953.0" width="6.4" height="18.1" fill="#000000"/>
<line x1="1824.1" y1="943.5" x2="1824.1" y2="987.7"/>
<rect x="1820.9" y="951.4" width="6.4" height="12.6" fill="#ffffff"/>
<line x1="1836.2" y1="913.5" x2="1836.2" y2="1004.3"/>
<rect x="1833.0" y="936.4" width="6.4" height="27.6" fill="#000000"/>
<line x1="1848.3" y1="863.7" x2="1848.3" y2="955.3"/>
<rect x="1845.1" y="863.7" width="6.4" height="73.5" fill="#000000"/>
<line x1="1860.3" y1="845.5" x2="1860.3" y2="893.7"/>
<rect x="1857.1" y="864.0" width="6.4" height="2.5" fill="#000000"/>
</g>
<rect x="690" y="1277.5" width="1180" height="4" fill="#a6a6a6"/>
<g clip-path="url(#mc)" stroke="#a4a4a4" stroke-width="1.8" fill="none">
<path d="M690.5,1394 V1379.5 H695.5 M698.6,1379.5 H706.6 M702.6,1379.5 V1394 M709.6,1379.5 H714.6 V1394 M719.5,1379.5 H723.5"/>
<path d="M726.7,1394 V1379.5 H731.7 M734.7,1379.5 H742.7 M738.7,1379.5 V1394 M745.8,1379.5 H750.8 V1394 M755.7,1379.5 H759.7"/>
<path d="M762.9,1394 V1379.5 H767.9 M770.9,1379.5 H778.9 M774.9,1379.5 V1394 M782.0,1379.5 H787.0 V1394 M791.9,1379.5 H795.9"/>
<path d="M799.0,1394 V1379.5 H804.0 M807.1,1379.5 H815.1 M811.1,1379.5 V1394 M818.2,1379.5 H823.2 V1394 M828.0,1379.5 H832.0"/>
<path d="M835.2,1394 V1379.5 H840.2 M843.3,1379.5 H851.3 M847.3,1379.5 V1394 M854.3,1379.5 H859.3 V1394 M864.2,1379.5 H868.2"/>
<path d="M871.4,1394 V1379.5 H876.4 M879.5,1379.5 H887.5 M883.5,1379.5 V1394 M890.5,1379.5 H895.5 V1394 M900.4,1379.5 H904.4"/>
<path d="M907.6,1394 V1379.5 H912.6 M915.6,1379.5 H923.6 M919.6,1379.5 V1394 M926.7,1379.5 H931.7 V1394 M936.6,1379.5 H940.6"/>
<path d="M943.8,1394 V1379.5 H948.8 M951.8,1379.5 H959.8 M955.8,1379.5 V1394 M962.9,1379.5 H967.9 V1394 M972.8,1379.5 H976.8"/>
<path d="M979.9,1394 V1379.5 H984.9 M988.0,1379.5 H996.0 M992.0,1379.5 V1394 M999.1,1379.5 H1004.1 V1394 M1008.9,1379.5 H1012.9"/>
<path d="M1016.1,1394 V1379.5 H1021.1 M1024.2,1379.5 H1032.2 M1028.2,1379.5 V1394 M1035.2,1379.5 H1040.2 V1394 M1045.1,1379.5 H1049.1"/>
<path d="M1052.3,1394 V1379.5 H1057.3 M1060.4,1379.5 H1068.4 M1064.4,1379.5 V1394 M1071.4,1379.5 H1076.4 V1394 M1081.3,1379.5 H1085.3"/>
<path d="M1088.5,1394 V1379.5 H1093.5 M1096.5,1379.5 H1104.5 M1100.5,1379.5 V1394 M1107.6,1379.5 H1112.6 V1394 M1117.5,1379.5 H1121.5"/>
<path d="M1124.7,1394 V1379.5 H1129.7 M1132.7,1379.5 H1140.7 M1136.7,1379.5 V1394 M1143.8,1379.5 H1148.8 V1394 M1153.7,1379.5 H1157.7"/>
<path d="M1160.8,1394 V1379.5 H1165.8 M1168.9,1379.5 H1176.9 M1172.9,1379.5 V1394 M1180.0,1379.5 H1185.0 V1394 M1189.8,1379.5 H1193.8"/>
<path d="M1197.0,1394 V1379.5 H1202.0 M1205.1,1379.5 H1213.1 M1209.1,1379.5 V1394 M1216.1,1379.5 H1221.1 V1394 M1226.0,1379.5 H1230.0"/>
<path d="M1233.2,1394 V1379.5 H1238.2 M1241.3,1379.5 H1249.3 M1245.3,1379.5 V1394 M1252.3,1379.5 H1257.3 V1394 M1262.2,1379.5 H1266.2"/>
<path d="M1269.4,1394 V1379.5 H1274.4 M1277.4,1379.5 H1285.4 M1281.4,1379.5 V1394 M1288.5,1379.5 H1293.5 V1394 M1298.4,1379.5 H1302.4"/>
<path d="M1305.6,1394 V1379.5 H1310.6 M1313.6,1379.5 H1321.6 M1317.6,1379.5 V1394 M1324.7,1379.5 H1329.7 V1394 M1334.6,1379.5 H1338.6"/>
<path d="M1341.7,1394 V1379.5 H1346.7 M1349.8,1379.5 H1357.8 M1353.8,1379.5 V1394 M1360.9,1379.5 H1365.9 V1394 M1370.7,1379.5 H1374.7"/>
<path d="M1377.9,1394 V1379.5 H1382.9 M1386.0,1379.5 H1394.0 M1390.0,1379.5 V1394 M1397.0,1379.5 H1402.0 V1394 M1406.9,1379.5 H1410.9"/>
<path d="M1414.1,1394 V1379.5 H1419.1 M1422.2,1379.5 H1430.2 M1426.2,1379.5 V1394 M1433.2,1379.5 H1438.2 V1394 M1443.1,1379.5 H1447.1"/>
<path d="M1450.3,1394 V1379.5 H1455.3 M1458.3,1379.5 H1466.3 M1462.3,1379.5 V1394 M1469.4,1379.5 H1474.4 V1394 M1479.3,1379.5 H1483.3"/>
<path d="M1486.5,1394 V1379.5 H1491.5 M1494.5,1379.5 H1502.5 M1498.5,1379.5 V1394 M1505.6,1379.5 H1510.6 V1394 M1515.5,1379.5 H1519.5"/>
<path d="M1522.6,1394 V1379.5 H1527.6 M1530.7,1379.5 H1538.7 M1534.7,1379.5 V1394 M1541.8,1379.5 H1546.8 V1394 M1551.6,1379.5 H1555.6"/>
<path d="M1558.8,1394 V1379.5 H1563.8 M1566.9,1379.5 H1574.9 M1570.9,1379.5 V1394 M1577.9,1379.5 H1582.9 V1394 M1587.8,1379.5 H1591.8"/>
<path d="M1595.0,1394 V1379.5 H1600.0 M1603.1,1379.5 H1611.1 M1607.1,1379.5 V1394 M1614.1,1379.5 H1619.1 V1394 M1624.0,1379.5 H1628.0"/>
<path d="M1631.2,1394 V1379.5 H1636.2 M1639.2,1379.5 H1647.2 M1643.2,1379.5 V1394 M1650.3,1379.5 H1655.3 V1394 M1660.2,1379.5 H1664.2"/>
<path d="M1667.4,1394 V1379.5 H1672.4 M1675.4,1379.5 H1683.4 M1679.4,1379.5 V1394 M1686.5,1379.5 H1691.5 V1394 M1696.4,1379.5 H1700.4"/>
<path d="M1703.5,1394 V1379.5 H1708.5 M1711.6,1379.5 H1719.6 M1715.6,1379.5 V1394 M1722.7,1379.5 H1727.7 V1394 M1732.5,1379.5 H1736.5"/>
<path d="M1739.7,1394 V1379.5 H1744.7 M1747.8,1379.5 H1755.8 M1751.8,1379.5 V1394 M1758.8,1379.5 H1763.8 V1394 M1768.7,1379.5 H1772.7"/>
<path d="M1775.9,1394 V1379.5 H1780.9 M1784.0,1379.5 H1792.0 M1788.0,1379.5 V1394 M1795.0,1379.5 H1800.0 V1394 M1804.9,1379.5 H1808.9"/>
<path d="M1812.1,1394 V1379.5 H1817.1 M1820.1,1379.5 H1828.1 M1824.1,1379.5 V1394 M1831.2,1379.5 H1836.2 V1394 M1841.1,1379.5 H1845.1"/>
<path d="M1848.3,1394 V1379.5 H1853.3 M1856.3,1379.5 H1864.3 M1860.3,1379.5 V1394 M1867.4,1379.5 H1872.4 V1394 M1877.3,1379.5 H1881.3"/>
</g>
<polyline points="1266,1362 1290,1378 1313,1392" fill="none" stroke="#d89a2a" stroke-width="1.8"/>
</svg>
<div class="t" style="left:695px;top:1287.0px;font-size:14px;color:#ececec;font-weight:normal;">MACD(12,26,9) -0.000237 -0.000142</div>
<div class="t" style="left:900px;width:114px;text-align:right;top:397.5px;font-size:14.5px;letter-spacing:-0.9px;color:#e0e0e0;">1.34582</div>
<div style="position:absolute;left:940px;top:453.5px;width:217px;height:55px;background:linear-gradient(#d4443b,#a8261e);"></div>
<div style="position:absolute;left:1045.5px;top:420px;width:111.5px;height:40px;background:linear-gradient(#de5048,#cf3e36);"></div>
<div style="position:absolute;left:1052px;top:451.5px;width:97px;height:1.5px;background:#9e2a22;"></div>
<div class="t" style="left:1083px;top:428.1px;font-size:15.5px;color:#f6d2cc;font-weight:normal;">BUY</div>
<div style="position:absolute;left:940px;top:420px;width:102.5px;height:30.5px;background:#fff;border:1px solid #cfcfcf;box-sizing:border-box;"></div>
<div style="position:absolute;left:1013.5px;top:423px;width:1.5px;height:25px;background:#cfcfcf;"></div>
<div class="t" style="left:975px;top:425.7px;font-size:17px;color:#555;font-weight:normal;">1.00</div>
<svg style="position:absolute;left:1021px;top:429px" width="14" height="10"><polyline points="3,7 7,3 11,7" fill="none" stroke="#666" stroke-width="1.5"/></svg>
<div class="t" style="left:985px;top:479.4px;font-size:17.5px;color:#ffffff;font-weight:bold;">1.34</div>
<div class="t" style="left:1030px;top:454.2px;font-size:44px;color:#ffffff;font-weight:normal;">59</div>
<div class="t" style="left:1096px;top:458.4px;font-size:15px;color:#ffffff;font-weight:bold;">4</div>
<div style="position:absolute;left:331px;top:274.5px;width:248.5px;height:436px;background:#fff;border:1.5px solid #9a9a9a;box-sizing:border-box;box-shadow:2px 2px 3px rgba(0,0,0,0.25);"></div>
<div style="position:absolute;left:333px;top:276px;width:39px;height:429px;background:#efefef;"></div>
<div style="position:absolute;left:334.5px;top:278px;width:239.5px;height:36.5px;background:#c4d4e6;border:2.2px solid #3e86f2;box-sizing:border-box;"></div>
<div class="t" style="left:385px;top:285.1px;font-size:18px;color:#3e3e3e;font-weight:normal;">Indicators</div>
<svg style="position:absolute;left:556px;top:290px" width="8" height="12"><polygon points="1,1 7,6 1,11" fill="#111"/></svg>
<div style="position:absolute;left:385px;top:321px;width:185px;height:1.5px;background:#e6e6e6;"></div>
<div class="t" style="left:385px;top:335.0px;font-size:18px;color:#3e3e3e;font-weight:normal;">Lines</div>
<div style="position:absolute;left:385px;top:355.4px;width:10px;height:1.8px;background:#3e3e3e;"></div>
<svg style="position:absolute;left:556px;top:339.4px" width="8" height="12"><polygon points="1,1 7,6 1,11" fill="#111"/></svg>
<div class="t" style="left:385px;top:371.0px;font-size:18px;color:#3e3e3e;font-weight:normal;">Channels</div>
<div style="position:absolute;left:385px;top:391.4px;width:12px;height:1.8px;background:#3e3e3e;"></div>
<svg style="position:absolute;left:556px;top:375.4px" width="8" height="12"><polygon points="1,1 7,6 1,11" fill="#111"/></svg>
<div class="t" style="left:385px;top:407.2px;font-size:18px;color:#3e3e3e;font-weight:normal;">Gann</div>
<div style="position:absolute;left:385px;top:427.6px;width:13px;height:1.8px;background:#3e3e3e;"></div>
<svg style="position:absolute;left:556px;top:411.6px" width="8" height="12"><polygon points="1,1 7,6 1,11" fill="#111"/></svg>
<div class="t" style="left:385px;top:443.6px;font-size:18px;color:#3e3e3e;font-weight:normal;">Fibonacci</div>
<div style="position:absolute;left:385px;top:464px;width:10px;height:1.8px;background:#3e3e3e;"></div>
<svg style="position:absolute;left:556px;top:448px" width="8" height="12"><polygon points="1,1 7,6 1,11" fill="#111"/></svg>
<div class="t" style="left:385px;top:479.6px;font-size:18px;color:#3e3e3e;font-weight:normal;">Shapes</div>
<div style="position:absolute;left:385px;top:500px;width:11px;height:1.8px;background:#3e3e3e;"></div>
<svg style="position:absolute;left:556px;top:484px" width="8" height="12"><polygon points="1,1 7,6 1,11" fill="#111"/></svg>
<div class="t" style="left:385px;top:516.1px;font-size:18px;color:#3e3e3e;font-weight:normal;">Arrows</div>
<div style="position:absolute;left:397px;top:536.5px;width:7px;height:1.8px;background:#3e3e3e;"></div>
<svg style="position:absolute;left:556px;top:520.5px" width="8" height="12"><polygon points="1,1 7,6 1,11" fill="#111"/></svg>
<div style="position:absolute;left:385px;top:553.5px;width:185px;height:1.5px;background:#e6e6e6;"></div>
<div class="t" style="left:385px;top:567.5px;font-size:18px;color:#3e3e3e;font-weight:normal;">Andrews' Pitchfork</div>
<div style="position:absolute;left:385px;top:587.9px;width:12px;height:1.8px;background:#3e3e3e;"></div>
<div class="t" style="left:385px;top:603.6px;font-size:18px;color:#3e3e3e;font-weight:normal;">Cycle Lines</div>
<div style="position:absolute;left:395px;top:624px;width:9px;height:1.8px;background:#3e3e3e;"></div>
<div class="t" style="left:385px;top:639.9px;font-size:18px;color:#3e3e3e;font-weight:normal;">Text</div>
<div style="position:absolute;left:405px;top:660.3px;width:9px;height:1.8px;background:#3e3e3e;"></div>
<div class="t" style="left:385px;top:675.4px;font-size:18px;color:#3e3e3e;font-weight:normal;">Text Label</div>
<div style="position:absolute;left:444px;top:695.8px;width:10px;height:1.8px;background:#3e3e3e;"></div>
<svg style="position:absolute;left:341px;top:566px" width="26" height="26"><path d="M3,21 L20,4 M7,24 L23,8" stroke="#2a2a2a" stroke-width="2.2"/></svg>
<svg style="position:absolute;left:342px;top:603px" width="24" height="24"><path d="M2,1 V22 M7,1 V22 M17,1 V22 M22,1 V22" stroke="#2a2a2a" stroke-width="2"/><path d="M12,2 V22" stroke="#2a2a2a" stroke-width="2" stroke-dasharray="2 2.5"/></svg>
<div class="t" style="left:345px;top:641.1px;font-size:19px;color:#222;font-weight:bold;">A</div>
<svg style="position:absolute;left:342px;top:676px" width="24" height="24"><rect x="2" y="2" width="19" height="19" fill="none" stroke="#333" stroke-width="1.2" stroke-dasharray="1.5 1"/><path d="M6,7 H17 M11.5,7 V19" stroke="#111" stroke-width="2.4"/><circle cx="2" cy="2" r="1.6" fill="#111"/></svg>
<div style="position:absolute;left:574.5px;top:272.5px;width:394.5px;height:421px;background:#fff;border:1.5px solid #9a9a9a;box-sizing:border-box;box-shadow:2px 2px 3px rgba(0,0,0,0.25);"></div>
<div style="position:absolute;left:576px;top:274px;width:40px;height:378px;background:#efefef;"></div>
<div class="t" style="left:629px;top:283.3px;font-size:18px;color:#3e3e3e;font-weight:normal;">Accelerator Oscillator</div>
<div class="t" style="left:629px;top:319.6px;font-size:18px;color:#3e3e3e;font-weight:normal;">Accumulation/Distribution</div>
<div class="t" style="left:629px;top:355.9px;font-size:18px;color:#3e3e3e;font-weight:normal;">Alligator</div>
<div class="t" style="left:629px;top:392.2px;font-size:18px;color:#3e3e3e;font-weight:normal;">Average Directional Movement Index</div>
<div class="t" style="left:629px;top:428.5px;font-size:18px;color:#3e3e3e;font-weight:normal;">Average True Range</div>
<div class="t" style="left:629px;top:464.8px;font-size:18px;color:#3e3e3e;font-weight:normal;">Awesome Oscillator</div>
<div style="position:absolute;left:629px;top:500.5px;width:333px;height:1.5px;background:#e6e6e6;"></div>
<div class="t" style="left:629px;top:514.6px;font-size:18px;color:#3e3e3e;font-weight:normal;">Trend</div>
<svg style="position:absolute;left:946px;top:519.0px" width="8" height="12"><polygon points="1,1 7,6 1,11" fill="#111"/></svg>
<div class="t" style="left:629px;top:551.2px;font-size:18px;color:#3e3e3e;font-weight:normal;">Oscillators</div>
<svg style="position:absolute;left:946px;top:555.6px" width="8" height="12"><polygon points="1,1 7,6 1,11" fill="#111"/></svg>
<div class="t" style="left:629px;top:587.9px;font-size:18px;color:#3e3e3e;font-weight:normal;">Volumes</div>
<svg style="position:absolute;left:946px;top:592.2px" width="8" height="12"><polygon points="1,1 7,6 1,11" fill="#111"/></svg>
<div class="t" style="left:629px;top:624.4px;font-size:18px;color:#3e3e3e;font-weight:normal;">Bill Williams</div>
<svg style="position:absolute;left:946px;top:628.8px" width="8" height="12"><polygon points="1,1 7,6 1,11" fill="#111"/></svg>
<div style="position:absolute;left:578.5px;top:653.5px;width:385px;height:36px;background:#c4d4e6;border:2.2px solid #3e86f2;box-sizing:border-box;"></div>
<div class="t" style="left:629px;top:660.9px;font-size:18px;color:#3e3e3e;font-weight:normal;">Custom</div>
<svg style="position:absolute;left:946px;top:665px" width="8" height="12"><polygon points="1,1 7,6 1,11" fill="#111"/></svg>
<div style="position:absolute;left:965.5px;top:648px;width:301px;height:800px;background:#fff;border:1.5px solid #9a9a9a;box-sizing:border-box;box-shadow:2px 2px 3px rgba(0,0,0,0.25);"></div>
<div style="position:absolute;left:967px;top:649.5px;width:39px;height:800px;background:#efefef;"></div>
<div style="position:absolute;left:968.5px;top:1233px;width:293.5px;height:36px;background:#c4d4e6;border:2.2px solid #3e86f2;box-sizing:border-box;"></div>
<div class="t" style="left:1019px;top:658.6px;font-size:18px;color:#3e3e3e;font-weight:normal;">Accelerator</div>
<div class="t" style="left:1019px;top:694.9px;font-size:18px;color:#3e3e3e;font-weight:normal;">Accumulation</div>
<div class="t" style="left:1019px;top:731.1px;font-size:18px;color:#3e3e3e;font-weight:normal;">Alligator</div>
<div class="t" style="left:1019px;top:767.4px;font-size:18px;color:#3e3e3e;font-weight:normal;">ATR</div>
<div class="t" style="left:1019px;top:803.6px;font-size:18px;color:#3e3e3e;font-weight:normal;">Awesome</div>
<div class="t" style="left:1019px;top:839.9px;font-size:18px;color:#3e3e3e;font-weight:normal;">Bands</div>
<div class="t" style="left:1019px;top:876.1px;font-size:18px;color:#3e3e3e;font-weight:normal;">Bears</div>
<div class="t" style="left:1019px;top:912.4px;font-size:18px;color:#3e3e3e;font-weight:normal;">Bulls</div>
<div class="t" style="left:1019px;top:948.6px;font-size:18px;color:#3e3e3e;font-weight:normal;">CCI</div>
<div class="t" style="left:1019px;top:984.9px;font-size:18px;color:#3e3e3e;font-weight:normal;">Custom Moving Averages</div>
<div class="t" style="left:1019px;top:1021.1px;font-size:18px;color:#3e3e3e;font-weight:normal;">SimplePanel</div>
<div class="t" style="left:1019px;top:1057.4px;font-size:18px;color:#3e3e3e;font-weight:normal;">Heiken Ashi</div>
<div class="t" style="left:1019px;top:1093.7px;font-size:18px;color:#3e3e3e;font-weight:normal;">Ichimoku</div>
<div class="t" style="left:1019px;top:1129.9px;font-size:18px;color:#3e3e3e;font-weight:normal;">iExposure</div>
<div class="t" style="left:1019px;top:1166.2px;font-size:18px;color:#3e3e3e;font-weight:normal;">MACD</div>
<div class="t" style="left:1019px;top:1202.4px;font-size:18px;color:#3e3e3e;font-weight:normal;">Momentum</div>
<div class="t" style="left:1019px;top:1238.7px;font-size:18px;color:#3e3e3e;font-weight:normal;">OsMA</div>
<div class="t" style="left:1019px;top:1274.9px;font-size:18px;color:#3e3e3e;font-weight:normal;">Parabolic</div>
<div class="t" style="left:1019px;top:1311.2px;font-size:18px;color:#3e3e3e;font-weight:normal;">RSI</div>
<div class="t" style="left:1019px;top:1347.4px;font-size:18px;color:#3e3e3e;font-weight:normal;">Stochastic</div>
<div class="t" style="left:1019px;top:1383.7px;font-size:18px;color:#3e3e3e;font-weight:normal;">ZigZag</div></div></body></html>
